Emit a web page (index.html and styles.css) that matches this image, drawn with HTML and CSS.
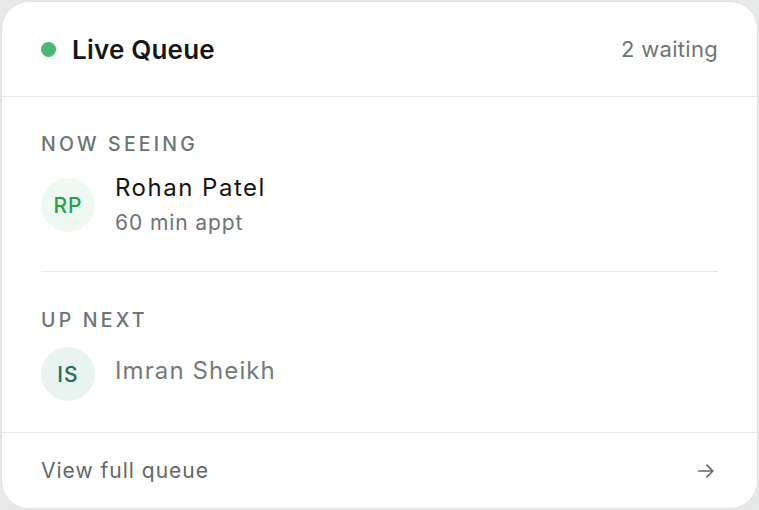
FILE: index.html
```html
<!DOCTYPE html>
<html lang="en">
<head>
  <meta charset="UTF-8" />
  <title>Live Queue</title>
  <link rel="stylesheet" href="styles.css">
</head>
<body>

  <div class="card">
    <!-- En-tête -->
    <div class="card-head">
      <div class="title">
        <span class="dot"></span>
        <h2>Live Queue</h2>
      </div>
      <span class="count">2 waiting</span>
    </div>

    <div class="card-body">
      <div class="section">
        <p class="label">NOW SEEING</p>
        <div class="patient">
          <div class="avatar current">RP</div>
          <div>
            <div class="name">Rohan Patel</div>
            <div class="meta">60 min appt</div>
          </div>
        </div>
      </div>

      <div class="section next">
        <p class="label">UP NEXT</p>
        <div class="patient">
          <div class="avatar">IS</div>
          <div class="name muted">Imran Sheikh</div>
        </div>
      </div>
    </div>

    <a class="card-foot" href="#">
      <span>View full queue</span>
      <svg width="22" height="22" viewBox="0 0 24 24" fill="none" stroke="currentColor" stroke-width="1.8" stroke-linecap="round" stroke-linejoin="round">
        <path d="M4 12h15" />
        <path d="M13 5.5l6.5 6.5-6.5 6.5" />
      </svg>
    </a>
  </div>

</body>
</html>
```

FILE: styles.css
```css
body {
  margin: 0;
  background: #e6e9e8;
  font-family: 'Inter', 'Noto Sans', sans-serif;
  padding: 1px 1px 0 1px;
}

.card {
  background: white;
  border: 1px solid #dde2df;
  border-radius: 28px;
  height: 508px;
  box-sizing: border-box;
  display: flex;
  flex-direction: column;
  overflow: hidden;
}

.card-head {
  display: flex;
  align-items: center;
  justify-content: space-between;
  height: 94px;
  flex-shrink: 0;
  padding: 0 39px;
  border-bottom: 1px solid #e3e7e5;
}

.title {
  display: flex;
  align-items: center;
  gap: 16px;
}

.dot {
  width: 15px;
  height: 15px;
  border-radius: 50%;
  background: #4cb874;
}

h2 {
  margin: 0;
  font-size: 26px;
  font-weight: 600;
  color: #141716;
  letter-spacing: 0.2px;
}

.count {
  font-size: 22px;
  color: #6d7572;
  letter-spacing: 0.3px;
}

.card-body {
  padding: 0 39px;
  flex: 1;
}

.section {
  padding: 35px 0 32px;
  border-bottom: 1px solid #e3e7e5;
}

.section.next {
  border-bottom: none;
  padding: 36px 0 0;
}

.label {
  margin: 0 0 15px;
  font-size: 19.5px;
  line-height: 24px;
  font-weight: 500;
  letter-spacing: 3.2px;
  color: #6b7571;
}

.patient {
  display: flex;
  align-items: center;
  gap: 20px;
}

.avatar {
  width: 54px;
  height: 54px;
  border-radius: 50%;
  background: #e9f3f0;
  color: #1f6e55;
  font-size: 21px;
  font-weight: 500;
  letter-spacing: 1px;
  display: flex;
  align-items: center;
  justify-content: center;
  flex-shrink: 0;
}

.avatar.current {
  background: #eefaf1;
  color: #2a9d4e;
}

.name {
  font-size: 24px;
  line-height: 34px;
  letter-spacing: 1.5px;
  color: #121514;
}

.name.muted {
  line-height: 28px;
  margin-bottom: 6px;
  letter-spacing: 1.1px;
  color: #737b78;
}

.meta {
  font-size: 21px;
  line-height: 32px;
  margin-top: 2px;
  letter-spacing: 0.9px;
  color: #6d7572;
}

.card-foot {
  display: flex;
  align-items: center;
  justify-content: space-between;
  height: 75px;
  flex-shrink: 0;
  padding: 0 40px 0 39px;
  border-top: 1px solid #e3e7e5;
  text-decoration: none;
  color: #5f6864;
  font-size: 21px;
  letter-spacing: 1px;
}
```
